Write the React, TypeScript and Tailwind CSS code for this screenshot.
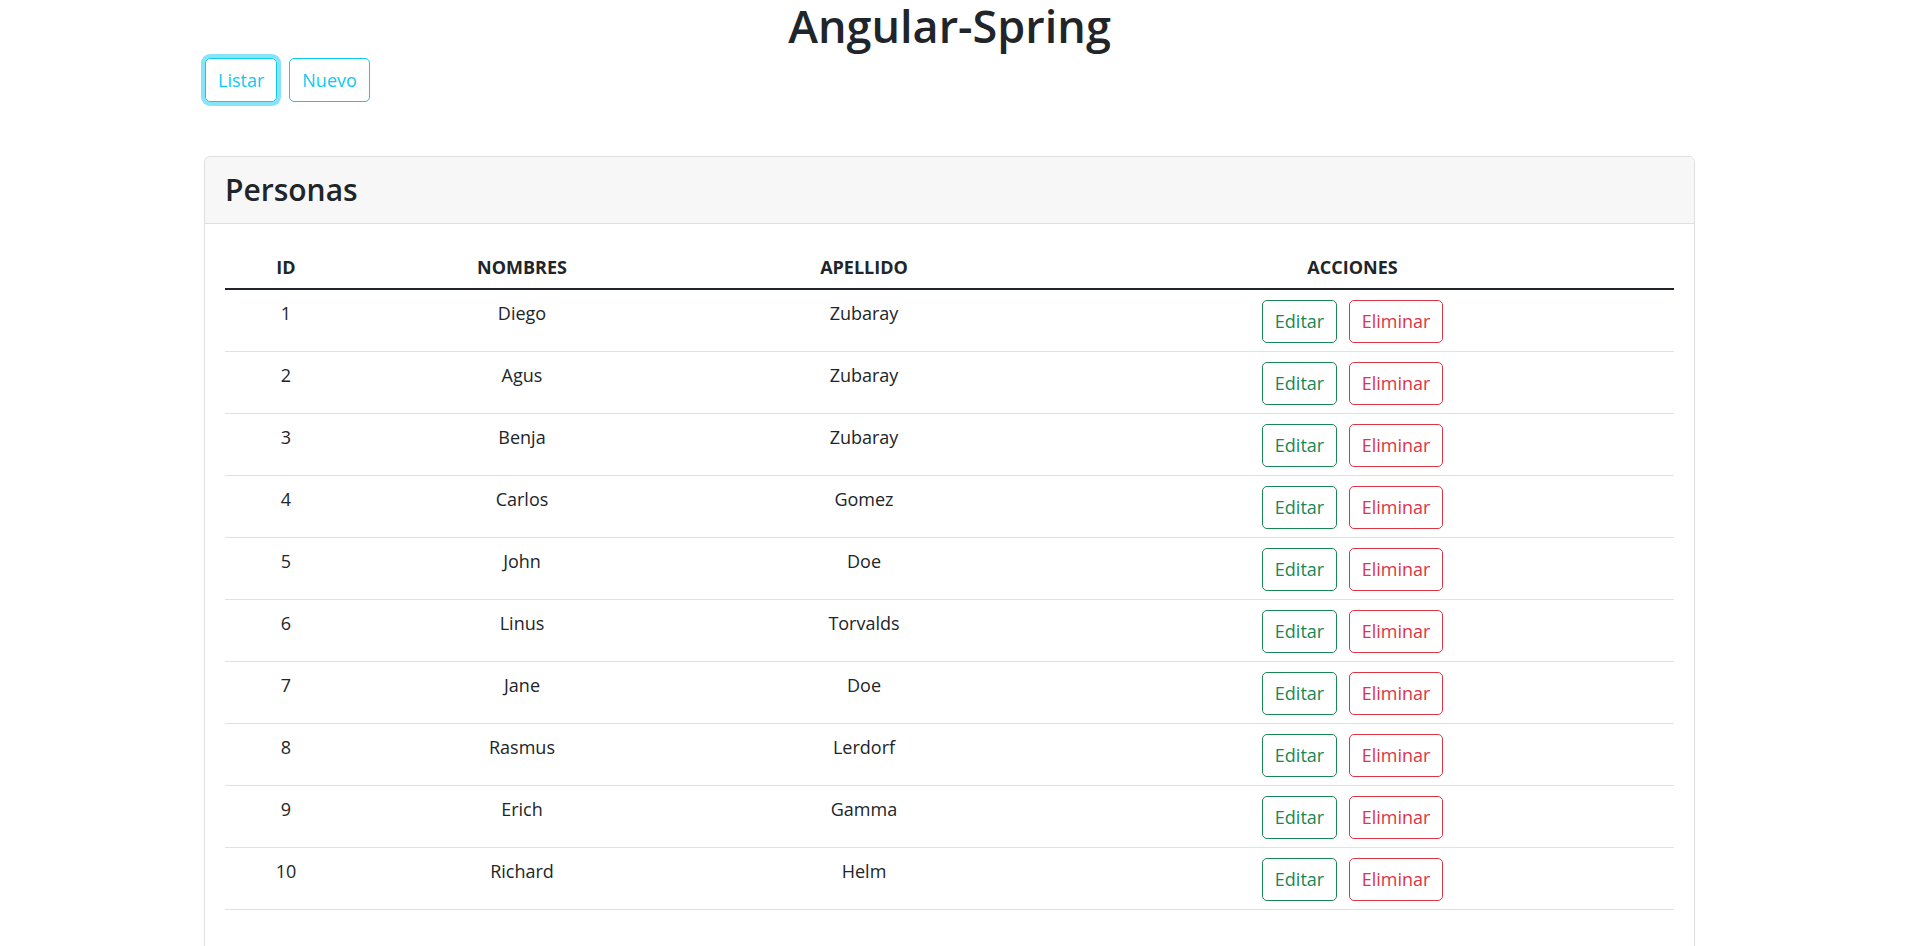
const personas = [
  { id: 1, nombre: 'Diego', apellido: 'Zubaray' },
  { id: 2, nombre: 'Agus', apellido: 'Zubaray' },
  { id: 3, nombre: 'Benja', apellido: 'Zubaray' },
  { id: 4, nombre: 'Carlos', apellido: 'Gomez' },
  { id: 5, nombre: 'John', apellido: 'Doe' },
  { id: 6, nombre: 'Linus', apellido: 'Torvalds' },
  { id: 7, nombre: 'Jane', apellido: 'Doe' },
  { id: 8, nombre: 'Rasmus', apellido: 'Lerdorf' },
  { id: 9, nombre: 'Erich', apellido: 'Gamma' },
  { id: 10, nombre: 'Richard', apellido: 'Helm' },
];

const cols = 'grid grid-cols-[122px_350px_334px_1fr]';

export default function App() {
  return (
    <div className="min-h-screen bg-white text-[#212529] font-['Open_Sans',sans-serif]">
      <div className="ml-[204px] w-[1491px]">
        <h1 className="h-[58px] text-center text-[45px] font-semibold leading-[52px]">
          Angular-Spring
        </h1>
        <div className="flex gap-3 px-[1px]">
          <button className="h-[44px] px-[12px] rounded-[5px] border border-[#0dcaf0] text-[#0dcaf0] text-[18px] shadow-[0_0_0_4px_rgba(13,202,240,0.5)]">
            Listar
          </button>
          <button className="h-[44px] px-[12px] rounded-[5px] border border-[#0dcaf0] text-[#0dcaf0] text-[18px]">
            Nuevo
          </button>
        </div>

        <div className="mt-[54px] rounded-[6px] border border-[#dfdfdf] h-[800px]">
          <div className="h-[67px] bg-[#f7f7f7] border-b border-[#dfdfdf] px-5 flex items-center rounded-t-[6px]">
            <h3 className="text-[30px] font-semibold leading-none">Personas</h3>
          </div>
          <div className="px-5 pt-5">
            <div className={`${cols} h-[46px] pt-[2px] items-center text-[18px] font-bold text-center border-b-2 border-[#212529]`}>
              <div>ID</div>
              <div>NOMBRES</div>
              <div>APELLIDO</div>
              <div>ACCIONES</div>
            </div>
            {personas.map((p) => (
              <div key={p.id} className={`${cols} h-[62px] text-[18px] text-center border-b border-[#dee2e6]`}>
                <div className="pt-[9px] leading-[28px]">{p.id}</div>
                <div className="pt-[9px] leading-[28px]">{p.nombre}</div>
                <div className="pt-[9px] leading-[28px]">{p.apellido}</div>
                <div className="pt-[10px] flex justify-center gap-3">
                  <button className="h-[43px] w-[75px] rounded-[5px] border border-[#198754] text-[#198754] text-[18px]">
                    Editar
                  </button>
                  <button className="h-[43px] w-[94px] rounded-[5px] border border-[#dc3545] text-[#dc3545] text-[18px]">
                    Eliminar
                  </button>
                </div>
              </div>
            ))}
          </div>
        </div>
      </div>
    </div>
  );
}
